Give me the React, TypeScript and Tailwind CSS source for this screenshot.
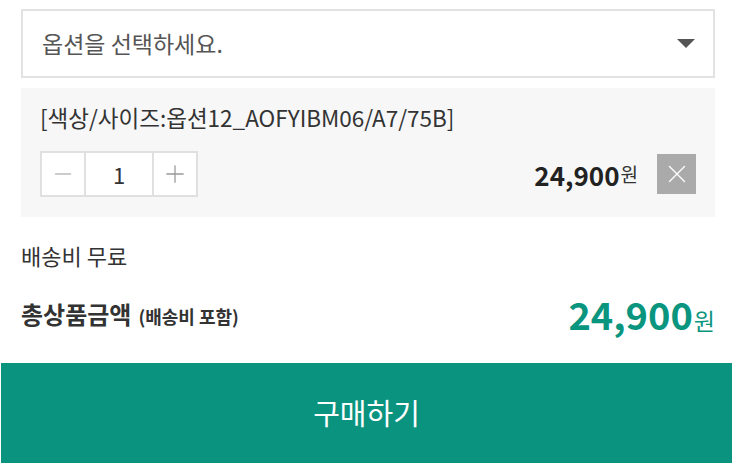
import { Minus, Plus, X } from "lucide-react";

export default function App() {
  return (
    <div className="w-[732px] h-[467px] bg-white text-[#222] font-['Noto_Sans_CJK_KR','Noto_Sans',sans-serif] overflow-hidden">
      <div className="pl-[21px] pr-[17px] pt-[9px]">
        {/* Option select */}
        <div className="h-[69px] border-2 border-[#e2e2e2] flex items-center justify-between pl-[19px] pr-[18px]">
          <span className="text-[23px] text-[#555]">옵션을 선택하세요.</span>
          <span className="w-0 h-0 border-l-[9px] border-r-[9px] border-t-[9px] border-l-transparent border-r-transparent border-t-[#555]" />
        </div>

        {/* Selected option */}
        <div className="mt-[10px] h-[129px] bg-[#f7f7f7] pl-[19px] pr-[19px] pt-[14px]">
          <div className="text-[22.5px] leading-[30px] text-[#333]">[색상/사이즈:옵션12_AOFYIBM06/A7/75B]</div>
          <div className="mt-[19px] flex items-center justify-between">
            <div className="flex h-[46px] border-2 border-[#e0e0e0] bg-white">
              <button className="w-[44px] flex items-center justify-center text-[#999] border-r-2 border-[#e0e0e0]">
                <Minus className="w-[26px] h-[26px]" strokeWidth={1.1} />
              </button>
              <div className="w-[66px] flex items-center justify-center text-[22px] text-[#333]">1</div>
              <button className="w-[44px] flex items-center justify-center text-[#999] border-l-2 border-[#e0e0e0]">
                <Plus className="w-[28px] h-[28px]" strokeWidth={1.1} />
              </button>
            </div>
            <div className="flex items-center">
              <span className="text-[26px] font-bold text-[#222]">24,900</span>
              <span className="text-[19px] text-[#333] ml-[1px]">원</span>
              <button className="ml-[19px] w-[39px] h-[40px] bg-[#aaaaaa] flex items-center justify-center text-white">
                <X className="w-[30px] h-[30px]" strokeWidth={1.1} />
              </button>
            </div>
          </div>
        </div>

        {/* Shipping */}
        <div className="mt-[18px] h-[40px] flex items-center text-[22px] text-[#333]">배송비 무료</div>

        {/* Total */}
        <div className="mt-[13px] h-[52px] flex items-center justify-between">
          <div className="flex items-baseline">
            <span className="text-[24px] font-bold text-[#333]">총상품금액</span>
            <span className="text-[18px] font-bold text-[#333] ml-[7px]">(배송비 포함)</span>
          </div>
          <div className="flex items-baseline text-[#0a957f]">
            <span className="text-[38px] font-bold leading-[52px]">24,900</span>
            <span className="text-[23px] ml-[1px]">원</span>
          </div>
        </div>
      </div>

      {/* Buy button */}
      <button className="mt-[23px] ml-[1px] w-[731px] h-[100px] bg-[#0a9480] text-white text-[29px] flex items-center justify-center">
        구매하기
      </button>
    </div>
  );
}
